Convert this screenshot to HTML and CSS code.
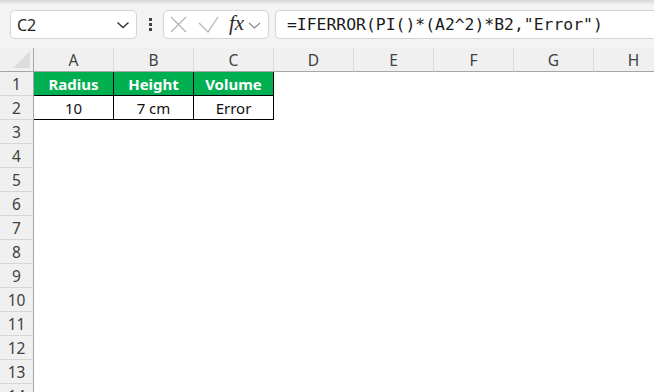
FILE: index.html
```html
<!DOCTYPE html>
<html>
<head>
<meta charset="utf-8">
<link rel="stylesheet" href="styles.css">
</head>
<body>
<div class="app">
  <div class="topband"></div>
  <div class="fbar">
    <div class="namebox">
      <span class="nb-text">C2</span>
      <svg class="nb-chev" width="14" height="8" viewBox="0 0 14 8"><path d="M1.5 1.5 L7 6.5 L12.5 1.5" fill="none" stroke="#333" stroke-width="1.4"/></svg>
    </div>
    <div class="dots"><i></i><i></i><i></i></div>
    <div class="fxbox">
      <svg class="ic-x" width="17" height="17" viewBox="0 0 17 17"><path d="M1 1 L16 16 M16 1 L1 16" stroke="#b5b5b5" stroke-width="1.3" fill="none"/></svg>
      <svg class="ic-ok" width="21" height="17" viewBox="0 0 21 17"><path d="M1 7 L10 16 L20 1" stroke="#b5b5b5" stroke-width="1.3" fill="none"/></svg>
      <span class="fx">fx</span>
      <svg class="ic-chev" width="13" height="7" viewBox="0 0 13 7"><path d="M1 1 L6.5 6 L12 1" fill="none" stroke="#8a8a8a" stroke-width="1.2"/></svg>
    </div>
    <div class="formula">=IFERROR(PI()*(A2^2)*B2,"Error")</div>
  </div>
  <div class="grid">
    <div class="corner"><span class="tri"></span></div>
    <div class="ch">A</div><div class="ch">B</div><div class="ch">C</div><div class="ch">D</div><div class="ch">E</div><div class="ch">F</div><div class="ch">G</div><div class="ch">H</div>

    <div class="rh">1</div>
    <div class="c t th tl">Radius</div><div class="c t th">Height</div><div class="c t th">Volume</div>
    <div class="c"></div><div class="c"></div><div class="c"></div><div class="c"></div><div class="c"></div>

    <div class="rh">2</div>
    <div class="c t tl">10</div><div class="c t">7 cm</div><div class="c t">Error</div>
    <div class="c"></div><div class="c"></div><div class="c"></div><div class="c"></div><div class="c"></div>

    <div class="rh">3</div><div class="c"></div><div class="c"></div><div class="c"></div><div class="c"></div><div class="c"></div><div class="c"></div><div class="c"></div><div class="c"></div>
    <div class="rh">4</div><div class="c"></div><div class="c"></div><div class="c"></div><div class="c"></div><div class="c"></div><div class="c"></div><div class="c"></div><div class="c"></div>
    <div class="rh">5</div><div class="c"></div><div class="c"></div><div class="c"></div><div class="c"></div><div class="c"></div><div class="c"></div><div class="c"></div><div class="c"></div>
    <div class="rh">6</div><div class="c"></div><div class="c"></div><div class="c"></div><div class="c"></div><div class="c"></div><div class="c"></div><div class="c"></div><div class="c"></div>
    <div class="rh">7</div><div class="c"></div><div class="c"></div><div class="c"></div><div class="c"></div><div class="c"></div><div class="c"></div><div class="c"></div><div class="c"></div>
    <div class="rh">8</div><div class="c"></div><div class="c"></div><div class="c"></div><div class="c"></div><div class="c"></div><div class="c"></div><div class="c"></div><div class="c"></div>
    <div class="rh">9</div><div class="c"></div><div class="c"></div><div class="c"></div><div class="c"></div><div class="c"></div><div class="c"></div><div class="c"></div><div class="c"></div>
    <div class="rh">10</div><div class="c"></div><div class="c"></div><div class="c"></div><div class="c"></div><div class="c"></div><div class="c"></div><div class="c"></div><div class="c"></div>
    <div class="rh">11</div><div class="c"></div><div class="c"></div><div class="c"></div><div class="c"></div><div class="c"></div><div class="c"></div><div class="c"></div><div class="c"></div>
    <div class="rh">12</div><div class="c"></div><div class="c"></div><div class="c"></div><div class="c"></div><div class="c"></div><div class="c"></div><div class="c"></div><div class="c"></div>
    <div class="rh">13</div><div class="c"></div><div class="c"></div><div class="c"></div><div class="c"></div><div class="c"></div><div class="c"></div><div class="c"></div><div class="c"></div>
    <div class="rh">14</div><div class="c"></div><div class="c"></div><div class="c"></div><div class="c"></div><div class="c"></div><div class="c"></div><div class="c"></div><div class="c"></div>
  </div>
</div>
</body>
</html>
```

FILE: styles.css
```css
* { box-sizing: border-box; }
html, body { margin: 0; padding: 0; }
body {
  width: 654px;
  height: 392px;
  overflow: hidden;
  background: #ffffff;
  font-family: "Noto Sans", "Open Sans", sans-serif;
}
.app { width: 654px; height: 392px; overflow: hidden; background: #f3f3f3; }

.topband {
  height: 4px;
  background: linear-gradient(#d6d6d6, #ececec);
}

.fbar {
  height: 44px;
  display: flex;
  align-items: flex-start;
  padding-top: 6px;
  padding-left: 10px;
}

.namebox {
  width: 127px;
  height: 29px;
  background: #fff;
  border: 1px solid #d4d4d4;
  border-radius: 5px;
  display: flex;
  align-items: center;
  padding-left: 6px;
  padding-right: 6px;
}
.nb-text { font-size: 16px; color: #1f1f1f; flex: 1; }
.nb-chev { display: block; margin-top: 1px; }

.dots {
  width: 26px;
  height: 29px;
  display: flex;
  flex-direction: column;
  align-items: center;
  justify-content: center;
  gap: 2px;
}
.dots i {
  display: block;
  width: 3px;
  height: 3px;
  background: #444;
}

.fxbox {
  width: 106px;
  height: 29px;
  background: #fff;
  border: 1px solid #d4d4d4;
  border-radius: 5px;
  display: flex;
  align-items: center;
  padding-left: 6px;
}
.ic-x { display: block; margin-right: 11px; }
.ic-ok { display: block; margin-right: 10px; }
.fx {
  font-family: "Liberation Serif", "DejaVu Serif", serif;
  font-style: italic;
  font-size: 21px;
  color: #2b2b2b;
  line-height: 1;
  margin-top: -2px;
  margin-right: 4px;
}
.ic-chev { display: block; margin-top: 2px; }

.formula {
  margin-left: 6px;
  flex: 1;
  height: 29px;
  background: #fff;
  border: 1px solid #d4d4d4;
  border-right: none;
  border-radius: 5px 0 0 5px;
  font-family: "DejaVu Sans Mono", "Liberation Mono", monospace;
  font-size: 16.4px;
  color: #1a1a1a;
  padding-left: 11px;
  line-height: 27px;
  white-space: nowrap;
}

.grid {
  display: grid;
  grid-template-columns: 34px repeat(8, 80px);
  grid-auto-rows: 24px;
  background: #fff;
}
.corner {
  background: #f0f0f0;
  border-right: 1px solid #a6a6a6;
  border-bottom: 1px solid #a6a6a6;
  position: relative;
}
.tri {
  position: absolute;
  right: 3px;
  bottom: 3px;
  width: 0;
  height: 0;
  border-left: 17px solid transparent;
  border-bottom: 17px solid #dcdcdc;
}
.ch {
  background: #f0f0f0;
  border-right: 1px solid #dadada;
  border-bottom: 1px solid #a6a6a6;
  display: flex;
  align-items: center;
  justify-content: center;
  font-size: 15.5px;
  color: #404040;
  padding-top: 1px;
}
.rh {
  background: #f0f0f0;
  border-right: 1px solid #a6a6a6;
  border-bottom: 1px solid #d6d6d6;
  display: flex;
  align-items: center;
  justify-content: center;
  font-size: 15.5px;
  color: #404040;
  padding-top: 1px;
}
.c { background: #fff; }
.t {
  border-right: 1px solid #000;
  border-bottom: 1px solid #000;
  display: flex;
  align-items: center;
  justify-content: center;
  font-size: 15px;
  color: #111;
  padding-top: 1px;
}
.th {
  background: #00b050;
  color: #fff;
  font-weight: bold;
}
```
